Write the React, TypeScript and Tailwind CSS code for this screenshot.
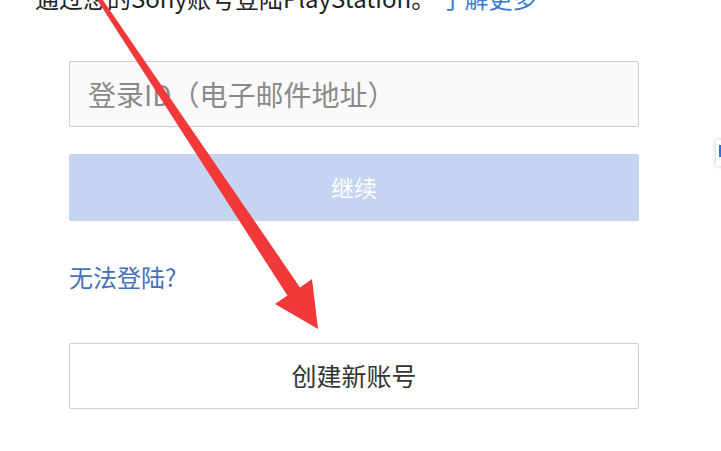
import React from 'react';

const font = { fontFamily: '"Noto Sans CJK SC", "Noto Sans", sans-serif' };

const RedArrow: React.FC = () => (
  <svg
    className="absolute left-0 top-0 pointer-events-none"
    width={721}
    height={451}
    viewBox="0 0 721 451"
  >
    <polygon
      points="98.6,-6.2 300,287.4 312,279 318,329 275,304 287.4,295.6 94.8,-3.8"
      fill="#f23838"
    />
  </svg>
);

export default function App() {
  return (
    <div className="relative w-[721px] h-[451px] overflow-hidden bg-white" style={font}>
      <div className="pl-[35px]">
        <p className="-mt-[14px] h-[24px] text-[24px] leading-[24px] text-[#222] whitespace-nowrap">
          通过您的Sony账号登陆PlayStation。 <span className="text-[#3b78d2]">了解更多</span>
        </p>
      </div>

      <div className="ml-[69px] w-[570px] mt-[51px] flex flex-col">
        <div className="h-[66px] border border-[#cdcdcd] rounded-[2px] bg-[#fafafa] flex items-center pl-[18px]">
          <span className="text-[28px] text-[#8a8a8a]">登录ID（电子邮件地址）</span>
        </div>

        <div className="mt-[27px] h-[67px] rounded-[2px] bg-[#c5d4f0] flex items-center justify-center">
          <span className="text-[23px] text-white">继续</span>
        </div>

        <div className="mt-[44px] h-[24px] flex items-center">
          <span className="text-[24px] leading-[24px] text-[#4870b8]">无法登陆?</span>
        </div>

        <div className="mt-[54px] h-[66px] border border-[#cdcdcd] rounded-[2px] bg-white flex items-center justify-center">
          <span className="text-[25px] text-[#333]">创建新账号</span>
        </div>
      </div>

      {/* clipped widget at the right edge */}
      <div className="absolute left-[716px] top-[140px] w-[12px] h-[26px] bg-white shadow-[0_0_4px_rgba(0,0,0,0.25)] pl-[3px] pt-[5px]">
        <div className="w-[2px] h-[12px] bg-[#2a6fe0]" />
      </div>

      <RedArrow />
    </div>
  );
}
